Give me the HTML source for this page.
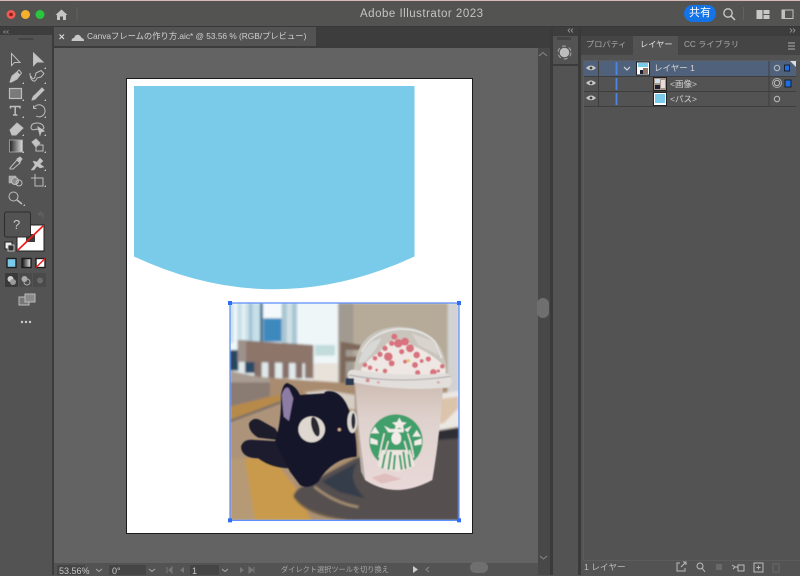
<!DOCTYPE html>
<html><head><meta charset="utf-8"><style>
html,body{margin:0;padding:0;background:#535353}
body{width:800px;height:575px;overflow:hidden;position:relative;font-family:"Liberation Sans","Noto Sans CJK JP",sans-serif;color:#c8c8c8}
.a{position:absolute}
.t{position:absolute;white-space:nowrap;line-height:1}
svg{position:absolute;left:0;top:0}
</style></head><body>
<div class="a" style="left:0;top:0;width:800px;height:2px;background:#d8b8b4"></div>
<div class="a" style="left:0;top:1px;width:800px;height:26px;background:#535352"></div>
<div class="a" style="left:0;top:26px;width:800px;height:1px;background:#383838"></div>
<div class="a" style="left:0;top:27px;width:800px;height:21px;background:#3d3d3d"></div>
<div class="a" style="left:0;top:35px;width:52px;height:540px;background:#535353"></div>
<div class="a" style="left:52px;top:27px;width:2px;height:548px;background:#3c3c3c"></div>
<div class="a" style="left:54px;top:27px;width:262px;height:20px;background:#535353"></div>
<div class="a" style="left:54px;top:47px;width:484px;height:516px;background:#636363"></div>
<div class="a" style="left:54px;top:46px;width:484px;height:2px;background:#3c3c3c"></div>
<div class="a" style="left:538px;top:48px;width:12px;height:527px;background:#484848"></div>
<div class="a" style="left:537px;top:298px;width:12px;height:20px;border-radius:6px;background:#6f6f6f"></div>
<div class="a" style="left:550px;top:27px;width:3px;height:548px;background:#3a3a3a"></div>
<div class="a" style="left:553px;top:27px;width:25px;height:548px;background:#535353"></div>
<div class="a" style="left:553px;top:27px;width:25px;height:9px;background:#3d3d3d"></div>
<div class="a" style="left:553px;top:64px;width:25px;height:2px;background:#3c3c3c"></div>
<div class="a" style="left:578px;top:27px;width:3px;height:548px;background:#3a3a3a"></div>
<div class="a" style="left:581px;top:36px;width:219px;height:539px;background:#535353"></div>
<div class="a" style="left:581px;top:27px;width:219px;height:9px;background:#3d3d3d"></div>
<div class="a" style="left:581px;top:36px;width:52px;height:19px;background:#454545"></div>
<div class="a" style="left:633px;top:36px;width:45px;height:19px;background:#535353"></div>
<div class="a" style="left:678px;top:36px;width:67px;height:19px;background:#454545"></div>
<div class="a" style="left:745px;top:36px;width:55px;height:19px;background:#454545"></div>
<div class="a" style="left:583px;top:60px;width:217px;height:501px;border:1px solid #5c5c5c;border-right:0;box-sizing:border-box"></div>
<!-- Artboard -->
<div class="a" style="left:127px;top:79px;width:345px;height:454px;background:#fff;outline:1px solid #1c1c1c;box-sizing:border-box"></div>
<!-- Status bar -->
<div class="a" style="left:54px;top:563px;width:484px;height:12px;background:#535353"></div>
<div class="a" style="left:57px;top:565px;width:28px;height:10px;background:#454545"></div>
<div class="a" style="left:109px;top:565px;width:37px;height:10px;background:#454545"></div>
<div class="a" style="left:190px;top:565px;width:29px;height:10px;background:#454545"></div>
<div class="a" style="left:470px;top:562px;width:18px;height:11px;border-radius:6px;background:#6f6f6f"></div>

<svg width="800" height="575" viewBox="0 0 800 575" xmlns="http://www.w3.org/2000/svg">
<defs>
<clipPath id="ph"><rect x="15" y="24" width="687" height="652"/></clipPath>
<filter id="b" x="-5%" y="-5%" width="110%" height="110%"><feGaussianBlur stdDeviation="3.500"/></filter>
<filter id="b2" x="-5%" y="-5%" width="110%" height="110%"><feGaussianBlur stdDeviation="1.600"/></filter>
<linearGradient id="gr" x1="0" x2="1" y1="0" y2="0"><stop offset="0" stop-color="#111"/><stop offset="1" stop-color="#eee"/></linearGradient>
<linearGradient id="gr2" x1="0" x2="1" y1="0" y2="0"><stop offset="0" stop-color="#222"/><stop offset="1" stop-color="#ddd"/></linearGradient>
<linearGradient id="cup" x1="0" x2="0" y1="0" y2="1"><stop offset="0" stop-color="#cdbcb2"/><stop offset=".35" stop-color="#dfd2ce"/><stop offset="1" stop-color="#e8d9d8"/></linearGradient>
<linearGradient id="wood" x1="0" x2="0" y1="0" y2="1"><stop offset="0" stop-color="#a98c70"/><stop offset="1" stop-color="#ab9072"/></linearGradient>
</defs>

<!-- Blue shape -->
<path d="M134 86H414.500V256.500Q274 322 134 256.500Z" fill="#7acbe9"/>

<!-- Traffic lights -->
<circle cx="11" cy="14.500" r="4.500" fill="#ee5a52"/><circle cx="11" cy="14.500" r="1.800" fill="#8c1d18"/>
<circle cx="25.500" cy="14.500" r="4.500" fill="#f5b02e"/>
<circle cx="40" cy="14.500" r="4.500" fill="#29c53f"/>
<path d="M55.500 15L61.500 9.500L67.500 15H66V20H63V16.500H60V20H57V15Z" fill="#c6c6c6"/>
<path d="M77 7V21" stroke="#626262"/>

<!-- Tab -->
<path d="M59.500 34.500L64 39M64 34.500L59.500 39" stroke="#ddd" stroke-width="1.100"/>
<path d="M71.500 41Q71.500 38 74 38Q75.500 34 79 35Q81 36 81.500 38Q84 38 84 41Z" fill="#c8c8c8"/>
<path d="M5.500 30.500L3.500 32L5.500 33.500M8.500 30.500L6.500 32L8.500 33.500" stroke="#999" fill="none" stroke-width=".7"/>
<rect x="18.500" y="78" width="0" height="0"/>
<rect x="18.500" y="38" width="15" height="2" fill="#444"/>

<!-- Tools -->
<g fill="none" stroke="#bdbdbd" stroke-width="1">
<path d="M11.500 53.500V65.500L14.500 62.500H20Z"/>
<path d="M33.500 53V65.500L37 62H43Z" fill="#c4c4c4"/>
<path d="M10 82L12 76L17 72L20 75L17 79L11.500 82Z" fill="#c4c4c4"/>
<path d="M17 72L19 70L21.500 73L20 75"/>
<path d="M31 76Q33 81 35 77L36 73L41 70.500L44 73.500L41 77L37 78Q35 83 32 80Q30 78 30 73"/>
<rect x="9.500" y="88.500" width="12" height="10" fill="#7a7a7a" stroke="#bdbdbd" stroke-width="1.200"/>
<path d="M32 100Q33 96 35 95L42 88L44 90L37 97Q35 100 32 100Z" fill="#c4c4c4"/>
<path d="M10.500 108.500V106.500H20V108.500M15.200 106.500V115M13 115H17.500" stroke-width="1.500"/>
<path d="M33.500 108.500A6 6 0 1 1 36 116M33.500 108.500V105.500M33.500 108.500H36.500"/>
<path d="M10 130L17 123L23 128L16 135H12Z" fill="#c4c4c4"/>
<path d="M31 128Q31 123 37 123Q43 123 44 128L41 131L37 129Q32 131 31 128Z"/>
<path d="M38 127L44 131L41 132L40 135Z" fill="#c4c4c4"/>
<rect x="9.500" y="140" width="13" height="12" fill="url(#gr2)" stroke="#aaa" stroke-width=".8"/>
<path d="M32 142L36 139L40 143L36 147Z" fill="#c4c4c4"/><rect x="36" y="145" width="7" height="6"/>
<path d="M10 168L17 160L20 163L13 169L10 169Z"/><path d="M17 159L20 157L22 159L20 162Z" fill="#c4c4c4"/>
<path d="M31 170L35 165L33 161L37 162L40 158L43 161L40 164L44 167L40 168L37 166L34 170Z" fill="#c4c4c4" stroke-width=".5"/>
<rect x="9" y="176" width="7" height="7" fill="#aaa" stroke-width=".5"/><circle cx="15" cy="181" r="3.500" fill="#8a8a8a"/><circle cx="19" cy="183" r="3"/>
<path d="M31 178H35M35 174V179"/><rect x="35" y="178" width="8" height="8"/>
<circle cx="13.500" cy="196.500" r="4.500"/><path d="M17 200L22 204" stroke-width="1.500"/>
<g fill="#c4c4c4" stroke="none">
<path d="M24 84h-2l2-2zM46 84h-2l2-2zM24 101h-2l2-2zM46 101h-2l2-2zM24 118h-2l2-2zM46 118h-2l2-2zM24 136h-2l2-2zM46 136h-2l2-2zM24 153h-2l2-2zM46 153h-2l2-2zM46 171h-2l2-2zM46 187h-2l2-2zM25 206h-2l2-2zM46 69h-2l2-2z"/>
</g>
</g>

<!-- Fill/stroke -->
<rect x="17" y="225" width="27" height="26" fill="#fff" stroke="#222"/>
<rect x="26" y="234" width="9" height="8" fill="#3c3c3c"/>
<path d="M18 250L43 226" stroke="#f01818" stroke-width="1.600"/>
<rect x="4.500" y="212" width="26" height="25" rx="2" fill="#535353" stroke="#2c2c2c"/>
<path d="M38 214L41 212V214H43V219M38 214L41 216" stroke="#666" fill="none"/>
<rect x="5" y="242" width="7" height="7" fill="#eee" stroke="#222"/>
<rect x="8" y="245" width="6" height="6" fill="#333" stroke="#ddd" stroke-width=".8"/>
<rect x="7" y="258.500" width="9" height="9" fill="#7acbe9" stroke="#1e1e1e" stroke-width="1.400"/>
<rect x="22" y="258.500" width="9" height="9" fill="url(#gr)" stroke="#1e1e1e" stroke-width="1.400"/>
<rect x="36" y="258.500" width="9" height="9" fill="#fff" stroke="#1e1e1e" stroke-width="1.400"/>
<path d="M36 267.500L45 258.500" stroke="#f01818" stroke-width="1.400"/>
<rect x="5" y="273" width="13" height="14" rx="1" fill="#3a3a3a"/>
<rect x="19" y="273" width="13" height="14" rx="1" fill="#4a4a4a"/>
<rect x="33" y="273" width="13" height="14" rx="1" fill="#4a4a4a"/>
<circle cx="10.500" cy="279" r="3" fill="#d0d0d0"/><circle cx="13" cy="282" r="3" fill="#9a9a9a"/>
<circle cx="24.500" cy="279" r="3" fill="#aaa"/><circle cx="27" cy="282" r="3" fill="none" stroke="#aaa"/>
<circle cx="40" cy="280.500" r="3" fill="#6a6a6a"/>
<rect x="19" y="297" width="10" height="8" fill="#777" stroke="#bbb"/>
<rect x="25" y="294" width="10" height="8" fill="#8a8a8a" stroke="#bbb"/>
<circle cx="22" cy="322" r="1.200" fill="#ccc"/><circle cx="26" cy="322" r="1.200" fill="#ccc"/><circle cx="30" cy="322" r="1.200" fill="#ccc"/>

<!-- Top right icons -->
<circle cx="728" cy="13" r="4.200" fill="none" stroke="#ccc" stroke-width="1.300"/>
<path d="M731 16L735 20" stroke="#ccc" stroke-width="1.500"/>
<path d="M743.500 7V20" stroke="#626262"/>
<rect x="756.500" y="10" width="6" height="9" fill="#c8c8c8"/>
<rect x="763.500" y="10" width="6" height="4" fill="#c8c8c8"/><rect x="763.500" y="15" width="6" height="4" fill="#c8c8c8"/>
<rect x="782" y="10" width="11" height="8.500" fill="none" stroke="#c0c0c0"/>
<rect x="782" y="10" width="3" height="8.500" fill="#c0c0c0"/>

<!-- Scroll & collapsers -->
<path d="M539 56L543 52.500L547 56" stroke="#888" fill="none" stroke-width="1"/>
<path d="M540 556L543.500 559L547 556" stroke="#888" fill="none" stroke-width="1"/>
<path d="M570 28.500L568 30.500L570 32.500M573 28.500L571 30.500L573 32.500" stroke="#aaa" fill="none" stroke-width=".7"/>
<path d="M790 28.500L792 30.500L790 32.500M793 28.500L795 30.500L793 32.500" stroke="#aaa" fill="none" stroke-width=".7"/>
<rect x="557" y="37" width="14" height="3" fill="#444"/>
<circle cx="564.500" cy="52.500" r="4.800" fill="#bdbdbd"/>
<circle cx="564.500" cy="52.500" r="6.500" fill="none" stroke="#aaa" stroke-width="1" stroke-dasharray="4 3"/>
<path d="M788 43h7M788 46h7M788 49h7" stroke="#999" stroke-width="1.200"/>

<!-- Layer panel -->
<rect x="584" y="61" width="212" height="15" fill="#50627b"/>
<path d="M790 61H796V67Z" fill="#ddd"/>
<path d="M584 91.500H796M584 106.500H796M584 76.500H796" stroke="#3e3e3e"/>
<path d="M598.500 61V106M769 61V106" stroke="#3e3e3e"/>
<g fill="#c9c9c9">
<path d="M586 68Q591 63 596 68Q591 72.500 586 68Z"/><path d="M586 83Q591 78 596 83Q591 87.500 586 83Z"/><path d="M586 98Q591 93 596 98Q591 102.500 586 98Z"/>
</g>
<circle cx="591" cy="68" r="1.400" fill="#444"/><circle cx="591" cy="83" r="1.400" fill="#444"/><circle cx="591" cy="98" r="1.400" fill="#444"/>
<path d="M616.500 62V75M616.500 78V90M616.500 93V105" stroke="#4c85e6" stroke-width="1.800"/>
<path d="M624 67L627 70L630 67" stroke="#ddd" fill="none" stroke-width="1.100"/>
<rect x="636.500" y="62" width="13" height="13" fill="#fff" stroke="#222"/>
<rect x="638" y="63" width="10" height="4" fill="#7acbe9"/><rect x="643" y="68" width="5" height="6" fill="#8c7466"/><rect x="640" y="70" width="3" height="4" fill="#1c2030"/>
<rect x="653.500" y="77.500" width="13" height="13" fill="#a8988c" stroke="#222"/>
<rect x="655" y="79" width="5" height="4" fill="#cfe0ea"/><rect x="655" y="85" width="5" height="4" fill="#1c2030"/><rect x="661" y="80" width="4" height="8" fill="#e8dcdc"/>
<rect x="653.500" y="92.500" width="13" height="13" fill="#fff" stroke="#222"/>
<rect x="655" y="94" width="10" height="9" fill="#7acbe9"/>
<g fill="none" stroke="#bdbdbd" stroke-width="1">
<circle cx="777" cy="68" r="2.700"/><circle cx="777" cy="83" r="2.700"/><circle cx="777" cy="99" r="2.700"/>
</g>
<circle cx="777" cy="83" r="4.500" fill="none" stroke="#aaa"/>
<rect x="784.500" y="65" width="5" height="6" fill="#1f6fe0" stroke="#111" stroke-width=".8"/>
<rect x="785" y="80" width="6" height="7" fill="#1f6fe0" stroke="#111" stroke-width=".8"/>

<!-- Bottom panel icons -->
<g fill="none" stroke="#bbb" stroke-width="1">
<path d="M680 563H677V571H685V568M681 567L686 562M683 562H686V565"/>
<circle cx="700" cy="566" r="3"/><path d="M702 568L705 572"/>
<path d="M732 565L735 567L733 569M735 567H738"/><rect x="738" y="565" width="6" height="6"/>
<rect x="754" y="563" width="9" height="9"/><path d="M758.500 565.500V569.500M756.500 567.500H760.500"/>
</g>
<rect x="716" y="564" width="6" height="6" fill="#6a6a6a"/>
<path d="M772 564H780M773 565V572H779V565" stroke="#6a6a6a" fill="none"/>

<!-- Status chevrons -->
<g fill="none" stroke="#aaa" stroke-width="1">
<path d="M96 569L99 571.500L102 569M149 569L152 571.500L155 569M222 569L225 571.500L228 569"/>
</g>
<g fill="#777"><path d="M167 567v6M172 567v6L169 570Z" stroke="#777"/><path d="M184 567v6L180 570Z"/><path d="M240 567v6L244 570Z"/><path d="M249 567v6L253 570ZM254 567v6" stroke="#777"/></g>
<path d="M413 566v7L418 569.500Z" fill="#ccc"/>
<path d="M429 567L426 569.500L429 572" stroke="#888" fill="none"/>

<!-- Photo -->
<g transform="translate(225 295) scale(.33333)">
<g clip-path="url(#ph)">
<g filter="url(#b)">
<rect x="15" y="24" width="687" height="652" fill="#ab9072"/>
<!-- window -->
<rect x="15" y="24" width="325" height="240" fill="#eef6f8"/>
<rect x="15" y="24" width="90" height="120" fill="#c6dfe8"/>
<rect x="25" y="24" width="12" height="120" fill="#eef5f7"/><rect x="50" y="24" width="12" height="120" fill="#e4eff2"/>
<rect x="72" y="24" width="10" height="120" fill="#a2c2d2"/>
<rect x="105" y="24" width="9" height="120" fill="#3e6e8e"/>
<rect x="115" y="24" width="55" height="46" fill="#f4f9fb"/>
<rect x="115" y="70" width="55" height="70" fill="#3d89bd"/>
<rect x="170" y="24" width="46" height="150" fill="#a9c6d2"/>
<rect x="185" y="24" width="16" height="150" fill="#cfe0e6"/>
<rect x="270" y="150" width="60" height="32" fill="#c2dcdc"/>
<rect x="262" y="205" width="78" height="60" fill="#e8e2da"/>
<!-- wall -->
<rect x="340" y="24" width="332" height="250" fill="#b6ab99"/>
<rect x="340" y="24" width="45" height="250" fill="#a09a90"/>
<rect x="668" y="24" width="34" height="280" fill="#d3d2d2"/>
<!-- dark beneath window -->
<rect x="15" y="165" width="230" height="85" fill="#e0e8ea"/>
<rect x="15" y="165" width="25" height="62" fill="#25465e"/>
<rect x="60" y="200" width="30" height="34" fill="#2b4a66"/>
<!-- chair -->
<path d="M38 135L265 150V250L240 250V205L38 200Z" fill="#8d7569"/>
<rect x="38" y="135" width="25" height="65" fill="#9d918c"/>
<g fill="#867068"><rect x="88" y="200" width="22" height="50"/><rect x="130" y="200" width="20" height="50"/><rect x="172" y="200" width="20" height="50"/><rect x="212" y="200" width="20" height="50"/></g>
<path d="M347 140L408 150V165H362V185H400V200H362V268H345Z" fill="#7d675a"/>
<!-- table -->
<path d="M15 240L340 262L400 270V676H15Z" fill="url(#wood)"/>
<path d="M15 228L135 252V262L15 265Z" fill="#a99c92"/>
<path d="M15 262H135V305L15 335Z" fill="#8b7c73"/>
<path d="M15 335L135 305L168 300L168 318L15 375Z" fill="#b78a4a"/>
<path d="M15 375L168 318V325L15 382Z" fill="#6f6a68"/>
<path d="M15 382L168 325L210 345L210 600L55 490L15 490Z" fill="#ad9379"/>
<path d="M55 490L110 488L165 515L210 575L260 676H80Z" fill="#c99a4c"/>
<path d="M15 490H60L90 676H15Z" fill="#b69a74"/>
<path d="M240 292L300 285L390 300V345L270 320Z" fill="#d6cdc3"/>
<!-- plate -->
<path d="M620 298L702 288V395L620 410Z" fill="#ebe7e3"/>
<path d="M640 312L700 305V340L655 385L630 385Z" fill="#dcc4ac"/>
<path d="M612 410L702 398V435L612 440Z" fill="#2e2e36"/>
<!-- tray -->
<path d="M205 605Q208 585 240 570L390 490L600 438L702 430V676H390Q250 660 205 605Z" fill="#54504f"/>
<path d="M205 605Q260 665 400 676L370 676Q240 665 205 605Z" fill="#6d5b4a"/>
<path d="M268 575Q330 625 400 636" stroke="#b39878" stroke-width="6" fill="none"/>
<path d="M400 500Q360 550 420 610L340 590L290 560Z" fill="#343c4c"/>
</g>
<g filter="url(#b2)">
<!-- cup -->
<path d="M388 262L655 262Q645 420 622 555Q510 615 420 555Q400 400 388 262Z" fill="url(#cup)"/>
<path d="M392 260Q398 400 420 555L408 530Q396 400 388 262Z" fill="#b8ada8"/>
<path d="M440 548L480 535L530 552L470 566Z" fill="#dcaeae" opacity=".6"/>
<!-- logo -->
<circle cx="513" cy="438" r="80" fill="#3f9f6a"/>
<path d="M457 512L470 465L556 465L570 512Q513 545 457 512Z" fill="#eee5e0"/>
<g fill="none" stroke="#3f9f6a" stroke-width="6">
<path d="M487 450Q478 485 472 520M498 470L490 524M510 480L506 524M524 480L530 524M535 470L542 522M545 450Q552 485 556 516"/>
</g>
<g fill="none" stroke="#eee5e0" stroke-width="4.500">
<path d="M478 415Q468 455 462 488M548 415Q562 455 566 488M490 438Q484 460 478 478M538 438Q544 460 550 478"/>
</g>
<ellipse cx="514" cy="430" rx="15" ry="19" fill="#f2ece8"/>
<path d="M497 432Q497 405 514 405Q532 405 531 432" fill="none" stroke="#3f9f6a" stroke-width="4"/>
<path d="M523 368L530 381L545 383L534 392L537 405L523 398L509 405L512 392L501 383L516 381Z" fill="#f2ece8"/>
<path d="M477 392L500 404L490 412ZM560 392L538 404L548 412ZM490 402H536V412H490Z" fill="#f2ece8"/>
<path d="M450 395L463 415H437ZM575 405L588 425H562ZM436 428L458 436V450L436 446ZM590 430L568 438V452L590 448Z" fill="#f2ece8"/>
<!-- dome -->
<path d="M388 225Q395 100 520 95Q660 100 665 235Z" fill="#c9c5bd"/>
<path d="M410 170Q440 110 520 102Q590 100 630 140Q640 165 650 190" fill="none" stroke="#e6e6e4" stroke-width="5"/>
<path d="M400 205Q410 165 440 140L470 130L450 165L420 200Z" fill="#d8d8d6"/>
<path d="M560 115L630 140L640 180L580 150Z" fill="#d8d3cc"/>
<!-- cream -->
<path d="M408 222Q430 190 465 170Q505 110 560 150Q620 175 660 215L662 250H410Z" fill="#efe7e3"/>
<g fill="#d8727e">
<circle cx="420" cy="210" r="7"/><circle cx="435" cy="218" r="7"/><circle cx="450" cy="190" r="7"/><circle cx="465" cy="178" r="8"/><circle cx="480" cy="160" r="8"/><circle cx="490" cy="185" r="13"/><circle cx="508" cy="125" r="9"/><circle cx="520" cy="145" r="13"/><circle cx="500" cy="145" r="8"/><circle cx="540" cy="140" r="12"/><circle cx="555" cy="160" r="12"/><circle cx="530" cy="170" r="8"/><circle cx="575" cy="180" r="10"/><circle cx="570" cy="210" r="9"/><circle cx="578" cy="233" r="8"/><circle cx="500" cy="205" r="9"/><circle cx="480" cy="228" r="7"/><circle cx="610" cy="192" r="8"/><circle cx="590" cy="198" r="6"/><circle cx="625" cy="232" r="10"/><circle cx="652" cy="214" r="7"/><circle cx="540" cy="200" r="6"/><circle cx="455" cy="225" r="4"/><circle cx="640" cy="228" r="5"/>
</g>
<circle cx="550" cy="197" r="5" fill="#e2c860"/>
<!-- rim -->
<path d="M368 235Q372 220 395 225Q520 245 660 235Q682 235 680 262L672 278Q520 290 385 262Q366 250 368 235Z" fill="#e2dedb"/>
<path d="M372 240Q520 268 678 244" fill="none" stroke="#b3aeae" stroke-width="3.500"/>
<circle cx="428" cy="256" r="6" fill="#d38c90"/><circle cx="460" cy="262" r="4" fill="#d8a4a6"/><circle cx="640" cy="262" r="4" fill="#d8a4a6"/>
<rect x="362" y="250" width="25" height="20" fill="#2c3a52"/>
<!-- cat -->
<path d="M72 385Q85 365 105 375L150 400L195 470L160 435L100 428Q70 410 72 385Z" fill="#1a1c2c"/>
<path d="M48 455Q55 430 90 435L180 440L200 520Q140 520 100 490Q50 490 48 455Z" fill="#1d1f2d"/>
<path d="M168 300Q175 260 190 265Q215 275 225 300L298 295Q300 285 325 290Q355 300 370 340Q395 400 395 485Q320 490 280 560Q250 585 225 570L195 530L150 440Q170 380 168 300Z" fill="#12152a"/>
<path d="M170 300Q180 270 192 280L205 310L192 378L176 365Z" fill="#8d7ca4"/>
<ellipse cx="260" cy="403" rx="40" ry="39" fill="#dfd8d0"/>
<ellipse cx="271" cy="395" rx="11" ry="30" transform="rotate(-15 271 395)" fill="#2a2a30"/>
<ellipse cx="382" cy="380" rx="15" ry="34" fill="#d8d5d0"/>
<ellipse cx="385" cy="378" rx="6" ry="24" fill="#2a2c38"/>
<circle cx="343" cy="404" r="5" fill="#cfa78c"/>
</g>
</g>
<!-- selection -->
<rect x="15" y="24" width="687" height="652" fill="none" stroke="#4d85ff" stroke-width="3.500"/>
<g fill="#2e6df2"><rect x="9" y="18" width="12" height="12"/><rect x="696" y="18" width="12" height="12"/><rect x="9" y="670" width="12" height="12"/><rect x="696" y="670" width="12" height="12"/></g>
</g>
</svg>

<!-- Text -->
<div class="t" style="left:360px;top:8.500px;font-size:11.500px;color:#c4c4c4;letter-spacing:.5px">Adobe Illustrator 2023</div>
<div class="a" style="left:684px;top:5px;width:32px;height:17px;border-radius:9px;background:#1473e6;color:#fff;font-size:11px;line-height:17px;text-align:center">共有</div>
<div class="t" style="left:87px;top:32px;font-size:8.300px;color:#d0d0d0">Canvaフレームの作り方.aic* @ 53.56 % (RGB/プレビュー)</div>
<div class="t" style="left:586px;top:41px;font-size:8.200px;color:#a8a8a8">プロパティ</div>
<div class="t" style="left:640px;top:41px;font-size:8.200px;color:#e4e4e4">レイヤー</div>
<div class="t" style="left:684px;top:41px;font-size:8.200px;color:#a8a8a8">CC ライブラリ</div>
<div class="t" style="left:654px;top:64px;font-size:8.500px;color:#d8d8d8">レイヤー 1</div>
<div class="t" style="left:670px;top:80px;font-size:8.500px;color:#d0d0d0">&lt;画像&gt;</div>
<div class="t" style="left:670px;top:95px;font-size:8.500px;color:#d0d0d0">&lt;パス&gt;</div>
<div class="t" style="left:13px;top:218px;font-size:13px;color:#c8c8c8;width:14px">?</div>
<div class="t" style="left:59px;top:567px;font-size:9px;color:#c8c8c8">53.56%</div>
<div class="t" style="left:112px;top:567px;font-size:9px;color:#c8c8c8">0°</div>
<div class="t" style="left:192px;top:567px;font-size:9px;color:#c8c8c8">1</div>
<div class="t" style="left:281px;top:566px;font-size:7.200px;color:#a8a8a8">ダイレクト選択ツールを切り換え</div>
<div class="t" style="left:584px;top:563px;font-size:8.700px;color:#bdbdbd">1 レイヤー</div>
</body></html>
